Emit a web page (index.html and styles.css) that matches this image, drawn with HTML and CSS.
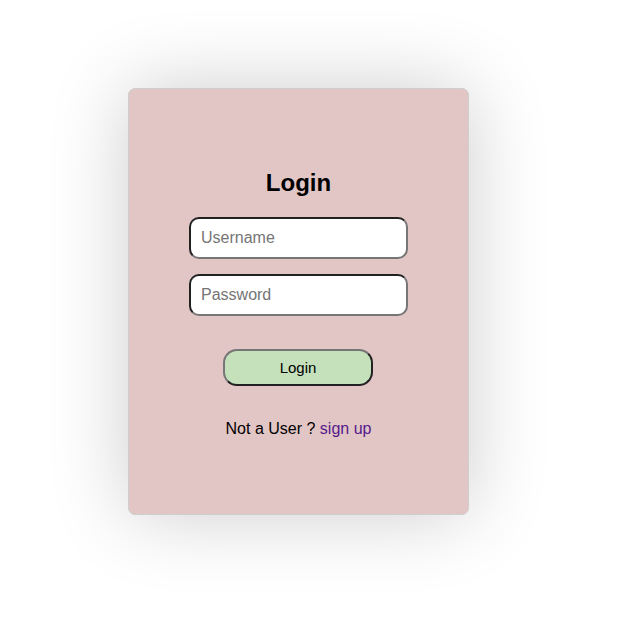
FILE: index.html
```html
<!DOCTYPE html>
<html>
<head>
<meta charset="utf-8">
<link rel="stylesheet" href="styles.css">
</head>
<body>
<div class="card">
  <h2 class="title">Login</h2>
  <input class="field" type="text" placeholder="Username">
  <input class="field" type="password" placeholder="Password">
  <button class="btn">Login</button>
  <p class="note">Not a User ? <a class="link" href="#">sign up</a></p>
</div>
</body>
</html>
```

FILE: styles.css
```css
html, body {
  margin: 0;
  padding: 0;
  background: #ffffff;
  font-family: "Liberation Sans", Arial, sans-serif;
}
body {
  box-sizing: border-box;
  min-height: 640px;
  padding-top: 88px;
  padding-bottom: 100px;
}
.card {
  box-sizing: border-box;
  margin-left: 128px;
  width: 341px;
  height: 427px;
  background: #e2c5c5;
  border: 1px solid #cfcfcf;
  border-radius: 7px;
  box-shadow: 0 0 80px rgba(0, 0, 0, 0.2);
  display: flex;
  flex-direction: column;
  align-items: center;
  padding-top: 80px;
}
.title {
  margin: 0 0 20px 0;
  font-size: 24px;
  font-weight: bold;
  color: #000;
}
.field {
  box-sizing: border-box;
  width: 219px;
  height: 42px;
  border: 2px inset #767676;
  border-radius: 10px;
  padding: 0 10px;
  font-family: "Liberation Sans", Arial, sans-serif;
  font-size: 16px;
  background: #fff;
  margin: 0 0 15px 0;
  outline: none;
}
.field::placeholder {
  color: #757575;
}
.btn {
  box-sizing: border-box;
  width: 150px;
  height: 37px;
  margin-top: 18px;
  margin-right: 1px;
  border: 2px outset #767676;
  border-radius: 14px;
  background: #c5e1bc;
  font-family: "Liberation Sans", Arial, sans-serif;
  font-size: 15px;
  color: #000;
}
.note {
  margin: 34px 0 0 0;
  font-size: 16px;
  color: #000;
}
.link {
  color: #551a8b;
  text-decoration: none;
}
```
